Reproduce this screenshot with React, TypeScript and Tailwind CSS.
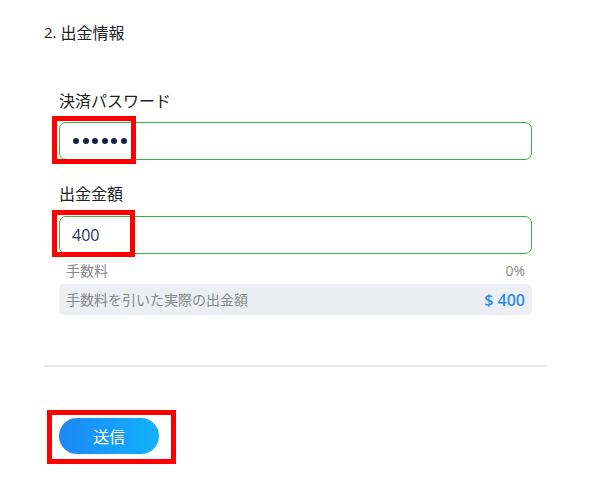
import React from "react";

const font = { fontFamily: '"Noto Sans CJK JP", "Liberation Sans", sans-serif' };
const latin = { fontFamily: '"Open Sans", "Liberation Sans", sans-serif' };

export default function App() {
  return (
    <div className="relative w-[591px] h-[489px] bg-white" style={font}>
      <div className="pl-[44px] pr-[44px] pt-[21px]">
        <div className="h-[22px] flex items-center text-[16px] text-[#222]">
          <span style={latin} className="text-[15px] mr-[4px]">2.</span>出金情報
        </div>

        <div className="pl-[15px] pr-[15px] pt-[46px]">
          <div className="h-[22px] flex items-center text-[16px] text-[#222]">決済パスワード</div>
          <div className="mt-[11px] h-[38px] rounded-[7px] border border-[#3aad4c] flex items-center pl-[13px]">
            <div className="flex gap-[3.6px]">
              {[0, 1, 2, 3, 4, 5].map((i) => (
                <span key={i} className="block w-[6px] h-[6px] rounded-full bg-[#14234a]" />
              ))}
            </div>
          </div>

          <div className="mt-[22px] h-[22px] flex items-center text-[16px] text-[#222]">出金金額</div>
          <div className="mt-[12px] h-[38px] rounded-[7px] border border-[#3aad4c] flex items-center px-[12px]">
            <span className="text-[16px] text-[#2b3566]" style={latin}>400</span>
          </div>

          <div className="mt-[5px] flex justify-between items-center h-[22px] pl-[7px] pr-[7px] text-[14px] text-[#8a8a8a]">
            <span>手数料</span>
            <span style={latin}>0%</span>
          </div>
          <div className="mt-[3px] h-[31px] rounded-[5px] bg-[#eceef3] flex justify-between items-center px-[7px]">
            <span className="text-[14px] text-[#888]">手数料を引いた実際の出金額</span>
            <span className="text-[16px] font-semibold text-[#2e8cf6]" style={latin}>$ 400</span>
          </div>
        </div>

        <div className="mt-[50px] h-[2px] bg-[#e8e9ec]" />

        <div className="pl-[15px] pt-[51px]">
          <button className="block w-[100px] h-[36px] rounded-full bg-gradient-to-r from-[#1d86f5] to-[#13b2fc] text-white text-[16px]">
            送信
          </button>
        </div>
      </div>

      <div className="absolute left-[52px] top-[116px] w-[84px] h-[48px] border-[5px] border-[#f00]" />
      <div className="absolute left-[52px] top-[210px] w-[83px] h-[47px] border-[5px] border-[#f00]" />
      <div className="absolute left-[47px] top-[410px] w-[129px] h-[54px] border-[5px] border-[#f00]" />
    </div>
  );
}
